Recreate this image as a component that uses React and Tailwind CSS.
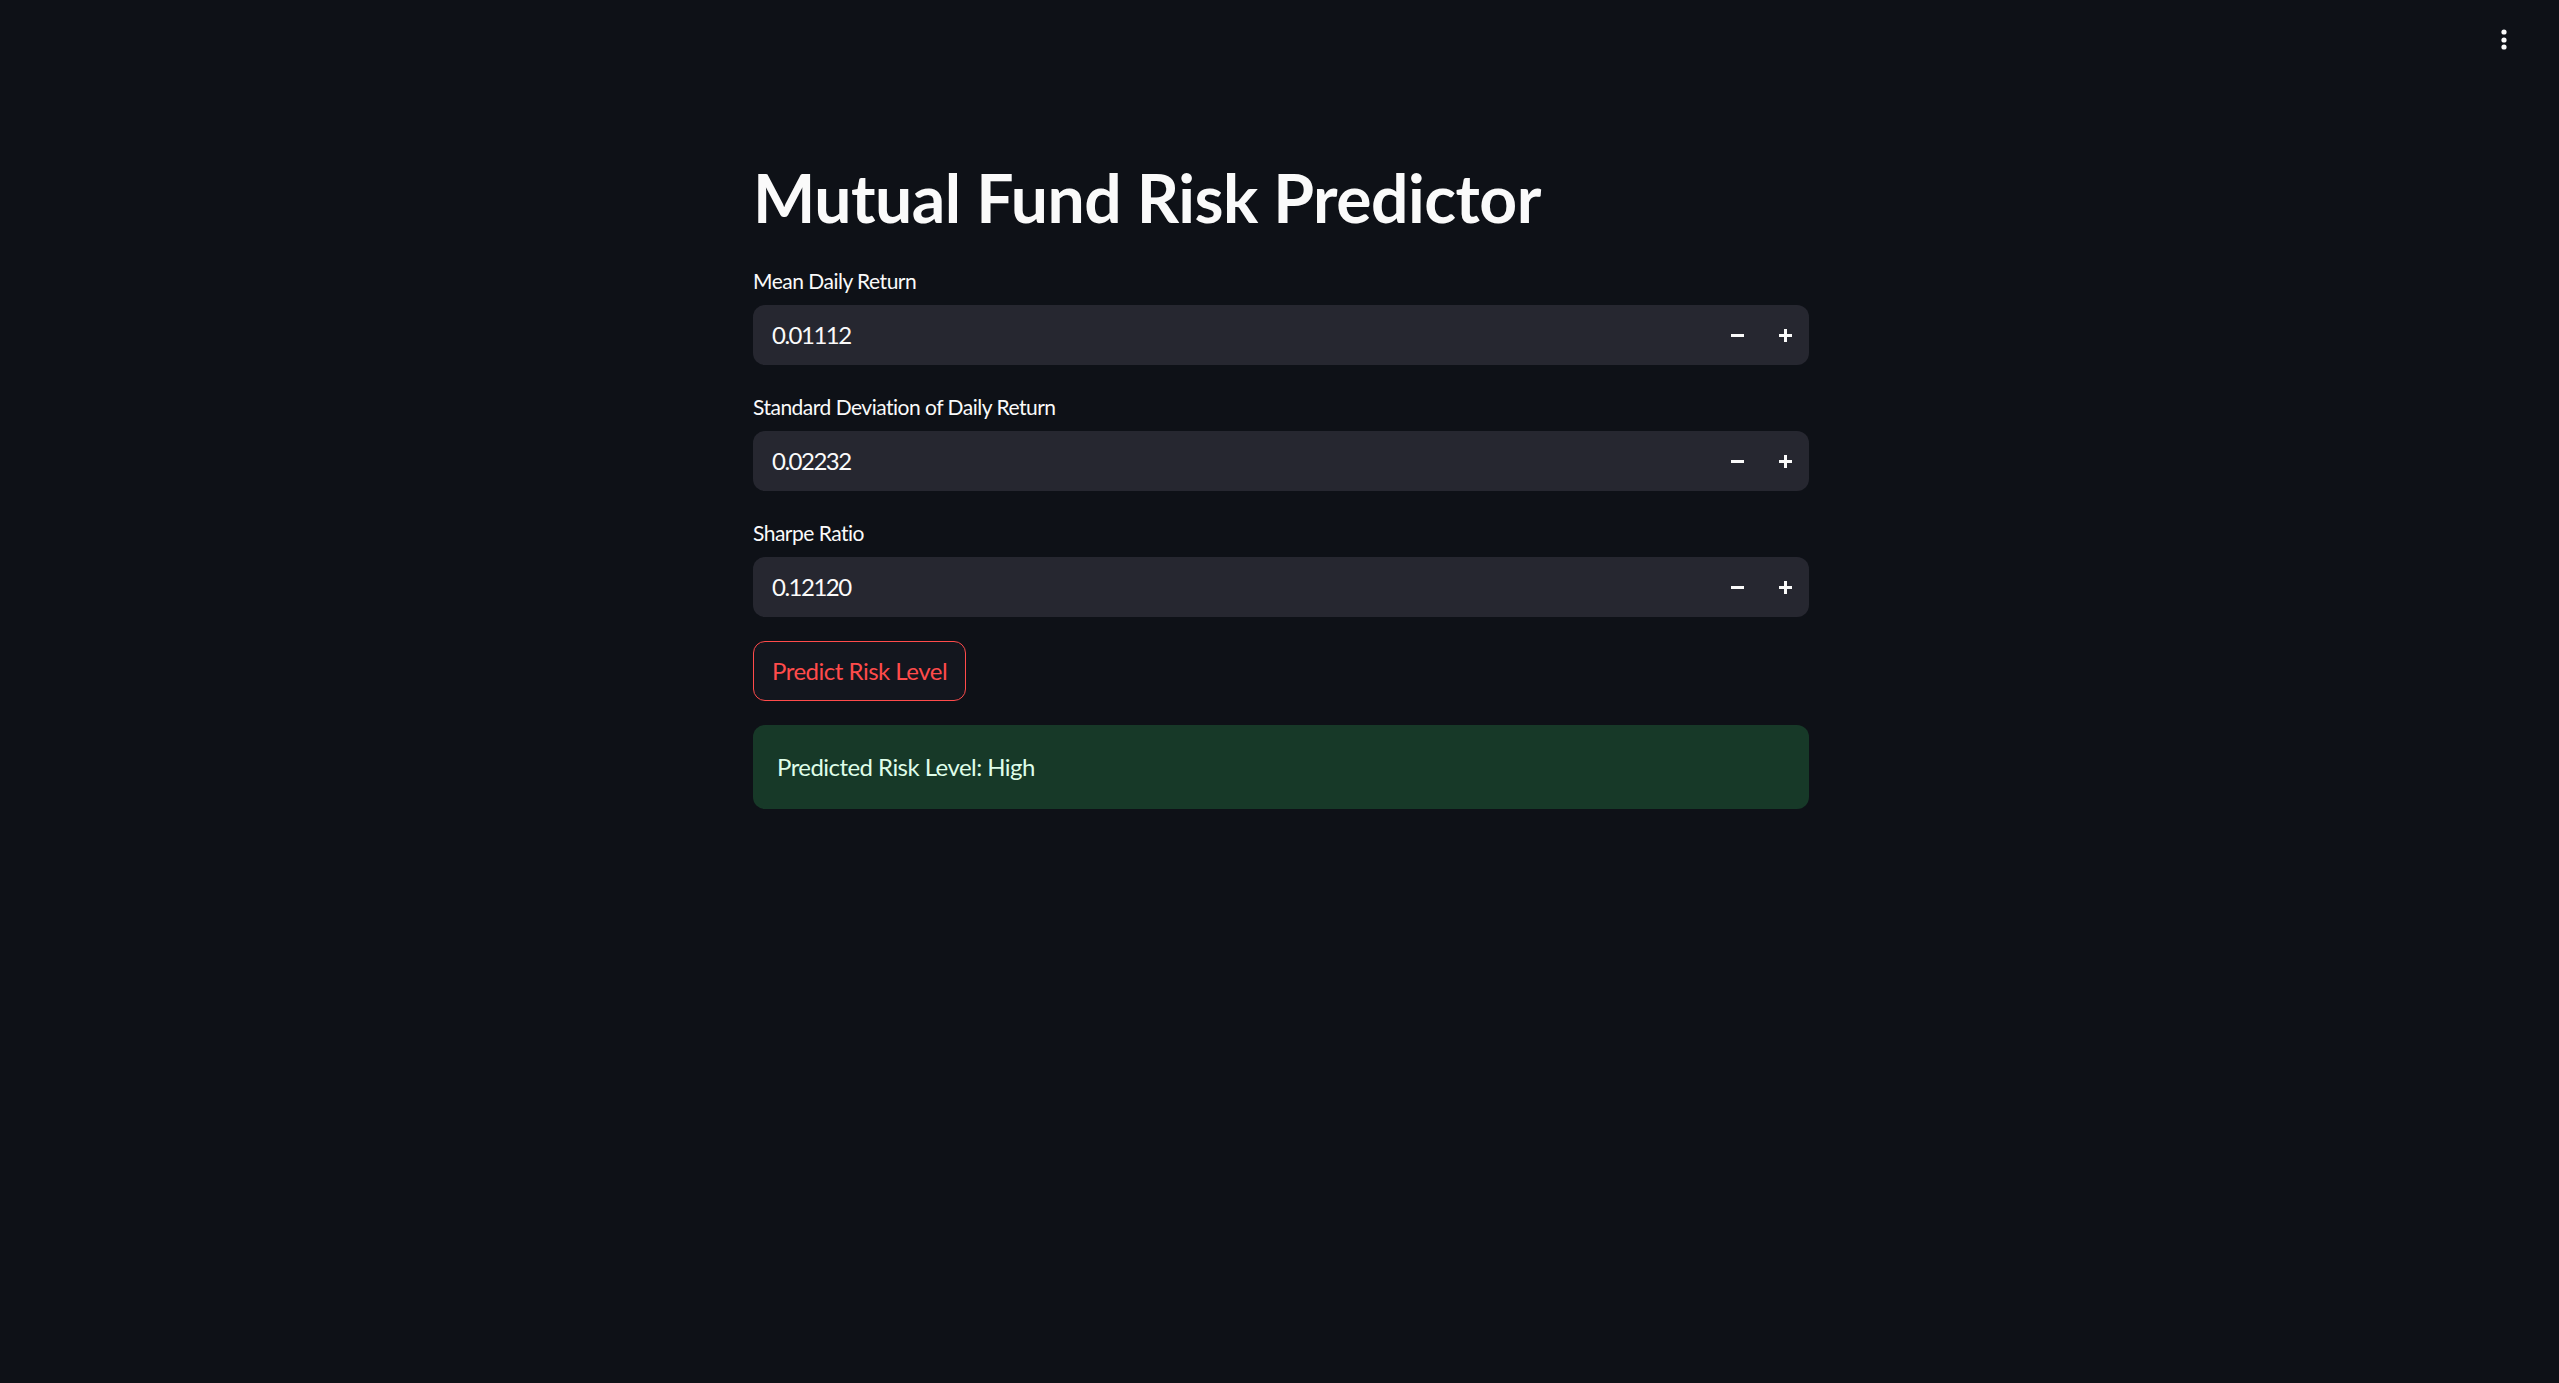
import React from 'react';

const font = { fontFamily: '"Source Sans Pro", Lato, "Noto Sans", sans-serif' };

function StepIcon({ kind }) {
  return (
    <svg width="13" height="13" viewBox="0 0 13 13" fill="none">
      <rect x="0" y="5" width="13" height="3" fill="#fafafa" />
      {kind === 'plus' && <rect x="5" y="0" width="3" height="13" fill="#fafafa" />}
    </svg>
  );
}

function NumberField({ label, value }) {
  return (
    <div className="flex flex-col">
      <div className="h-[36px] mb-[6px] flex items-center text-[21px] tracking-[-0.5px] text-[#fafafa]">
        {label}
      </div>
      <div className="h-[60px] rounded-[12px] bg-[#262730] flex items-center">
        <div className="flex-1 pl-[19px] text-[24px] tracking-[-1.5px] text-[#fafafa]">{value}</div>
        <button className="w-[48px] h-full flex items-center justify-center">
          <StepIcon kind="minus" />
        </button>
        <button className="w-[48px] h-full flex items-center justify-center">
          <StepIcon kind="plus" />
        </button>
      </div>
    </div>
  );
}

export default function App() {
  return (
    <div className="min-h-screen w-full bg-[#0e1117] relative pl-[3px]" style={font}>
      {/* Header menu */}
      <div className="absolute top-[28px] right-[52px]">
        <svg width="6" height="22" viewBox="0 0 6 22" fill="#fafafa">
          <circle cx="3" cy="4" r="2.6" />
          <circle cx="3" cy="12" r="2.6" />
          <circle cx="3" cy="19" r="2.6" />
        </svg>
      </div>

      <div className="w-[1056px] mx-auto pt-[158px] pb-20">
        <h1 className="text-[66px] font-bold leading-[79px] text-[#fafafa] tracking-[-0.5px] mb-[26px]">
          Mutual Fund Risk Predictor
        </h1>

        <div className="flex flex-col gap-[24px]">
          <NumberField label="Mean Daily Return" value="0.01112" />
          <NumberField label="Standard Deviation of Daily Return" value="0.02232" />
          <NumberField label="Sharpe Ratio" value="0.12120" />

          <div>
            <button className="h-[60px] px-[18px] rounded-[12px] border border-[#ff4b4b] bg-[#13161e] text-[#ff4b4b] text-[24px] tracking-[-0.5px]">
              Predict Risk Level
            </button>
          </div>

          <div className="rounded-[12px] bg-[#173928] p-[24px] text-[24px] leading-[36px] tracking-[-0.55px] text-[#dffde9]">
            Predicted Risk Level: High
          </div>
        </div>
      </div>
    </div>
  );
}
